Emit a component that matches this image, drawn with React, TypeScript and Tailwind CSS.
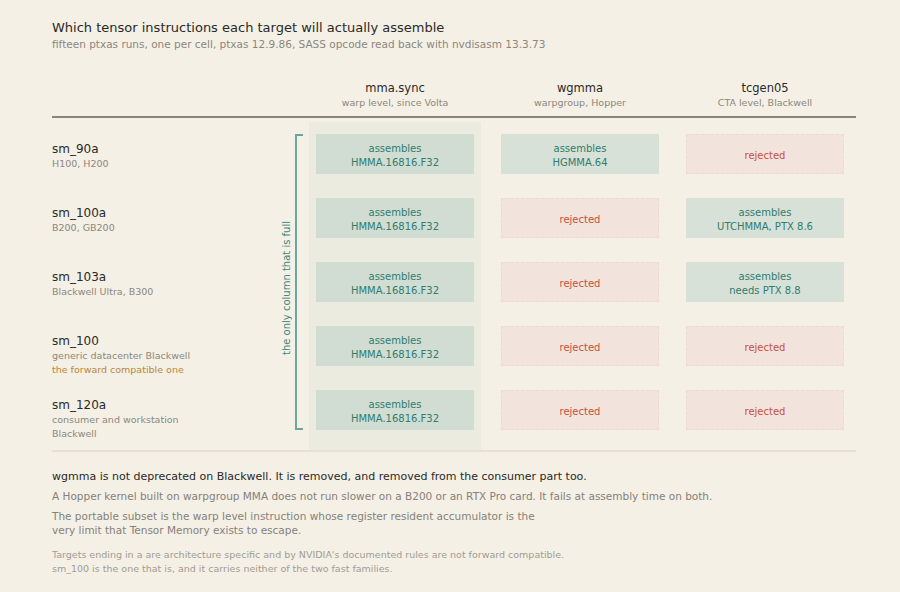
import React from 'react';

type Cell = { ok: boolean; lines?: string[] };

interface Target {
  name: string;
  sub: string[];
  note?: string;
  cells: Cell[];
}

const targets: Target[] = [
  {
    name: 'sm_90a',
    sub: ['H100, H200'],
    cells: [
      { ok: true, lines: ['assembles', 'HMMA.16816.F32'] },
      { ok: true, lines: ['assembles', 'HGMMA.64'] },
      { ok: false },
    ],
  },
  {
    name: 'sm_100a',
    sub: ['B200, GB200'],
    cells: [
      { ok: true, lines: ['assembles', 'HMMA.16816.F32'] },
      { ok: false },
      { ok: true, lines: ['assembles', 'UTCHMMA, PTX 8.6'] },
    ],
  },
  {
    name: 'sm_103a',
    sub: ['Blackwell Ultra, B300'],
    cells: [
      { ok: true, lines: ['assembles', 'HMMA.16816.F32'] },
      { ok: false },
      { ok: true, lines: ['assembles', 'needs PTX 8.8'] },
    ],
  },
  {
    name: 'sm_100',
    sub: ['generic datacenter Blackwell'],
    note: 'the forward compatible one',
    cells: [
      { ok: true, lines: ['assembles', 'HMMA.16816.F32'] },
      { ok: false },
      { ok: false },
    ],
  },
  {
    name: 'sm_120a',
    sub: ['consumer and workstation', 'Blackwell'],
    cells: [
      { ok: true, lines: ['assembles', 'HMMA.16816.F32'] },
      { ok: false },
      { ok: false },
    ],
  },
];

const columns = [
  { name: 'mma.sync', sub: 'warp level, since Volta' },
  { name: 'wgmma', sub: 'warpgroup, Hopper' },
  { name: 'tcgen05', sub: 'CTA level, Blackwell' },
];

const CellBox: React.FC<{ cell: Cell; highlighted: boolean }> = ({ cell, highlighted }) => {
  if (!cell.ok) {
    return (
      <div className="h-[40px] pt-[3px] flex items-center justify-center bg-[#f2e4dc] border border-dashed border-[#eddbd1] text-[#c8503c] text-[10px] leading-[14px]">
        rejected
      </div>
    );
  }
  return (
    <div
      className={`h-[40px] pt-[3px] flex flex-col items-center justify-center text-[#2f7c6f] text-[10px] leading-[14px] ${
        highlighted ? 'bg-[#d1ddd2]' : 'bg-[#d8e1d7]'
      }`}
    >
      {cell.lines?.map((l) => (
        <span key={l}>{l}</span>
      ))}
    </div>
  );
};

export default function App() {
  return (
    <div
      className="w-[900px] h-[592px] bg-[#f4f0e6] px-[52px] pt-[20px] overflow-hidden"
      style={{ fontFamily: '"DejaVu Sans", Verdana, sans-serif' }}
    >
      <div className="w-[804px]">
        <h1 className="text-[13px] leading-[16px] text-[#2a2926] font-normal">
          Which tensor instructions each target will actually assemble
        </h1>
        <p className="mt-[1px] text-[10.5px] leading-[14px] text-[#8c877d]">
          fifteen ptxas runs, one per cell, ptxas 12.9.86, SASS opcode read back with nvdisasm 13.3.73
        </p>

        {/* column headers */}
        <div className="mt-[29px] flex">
          <div className="w-[257px]" />
          {columns.map((c, i) => (
            <div
              key={c.name}
              className={`w-[172px] flex flex-col items-center ${i > 0 ? 'ml-[13px]' : ''}`}
            >
              <span className="text-[11.5px] leading-[16px] text-[#2a2926]">{c.name}</span>
              <span className="text-[9.5px] leading-[13px] text-[#8c877d]">{c.sub}</span>
            </div>
          ))}
        </div>
        <div className="mt-[7px] h-[2px] bg-[#8a857b]" />

        {/* body */}
        <div className="mt-[4px] h-[328px] flex">
          <div className="w-[228px] h-[328px] flex flex-col pt-[12px]">
            {targets.map((t) => (
              <div key={t.name} className="h-[64px] shrink-0 pt-[8px] flex flex-col">
                <span className="text-[12px] leading-[15px] text-[#2a2926]">{t.name}</span>
                {t.sub.map((s) => (
                  <span key={s} className="text-[9.5px] leading-[13.5px] text-[#8c877d]">
                    {s}
                  </span>
                ))}
                {t.note && (
                  <span className="text-[9.5px] leading-[13.5px] text-[#b8873d]">{t.note}</span>
                )}
              </div>
            ))}
          </div>

          <div className="w-[29px] flex items-stretch justify-end gap-[2px] pr-[6px] pt-[12px] pb-[20px]">
            <div className="flex items-center pt-[12px]">
              <span className="[writing-mode:vertical-rl] rotate-180 text-[10px] leading-[12px] text-[#3f897d] whitespace-nowrap">
                the only column that is full
              </span>
            </div>
            <div className="w-[8px] border-l-2 border-t-2 border-b-2 border-[#6aa69b]" />
          </div>

          {[0, 1, 2].map((ci) => (
            <div
              key={ci}
              className={`w-[172px] px-[7px] pt-[12px] pb-[20px] flex flex-col gap-[24px] ${
                ci > 0 ? 'ml-[13px]' : 'bg-[#ebebe0]'
              }`}
            >
              {targets.map((t) => (
                <CellBox key={t.name} cell={t.cells[ci]} highlighted={ci === 0} />
              ))}
            </div>
          ))}
        </div>
        <div className="h-[2px] bg-[#e8e1d1]" />

        {/* notes */}
        <p className="mt-[17px] text-[11px] leading-[15px] text-[#2a2926]">
          wgmma is not deprecated on Blackwell. It is removed, and removed from the consumer part too.
        </p>
        <p className="mt-[5px] text-[10.5px] leading-[14px] text-[#86817a]">
          A Hopper kernel built on warpgroup MMA does not run slower on a B200 or an RTX Pro card. It fails at assembly time on both.
        </p>
        <p className="mt-[6px] max-w-[500px] text-[10.5px] leading-[14px] text-[#86817a]">
          The portable subset is the warp level instruction whose register resident accumulator is the very limit that Tensor Memory exists to escape.
        </p>
        <p className="mt-[11px] text-[9.5px] leading-[14px] text-[#a19c92]">
          Targets ending in a are architecture specific and by NVIDIA's documented rules are not forward compatible.
          <br />
          sm_100 is the one that is, and it carries neither of the two fast families.
        </p>
      </div>
    </div>
  );
}
